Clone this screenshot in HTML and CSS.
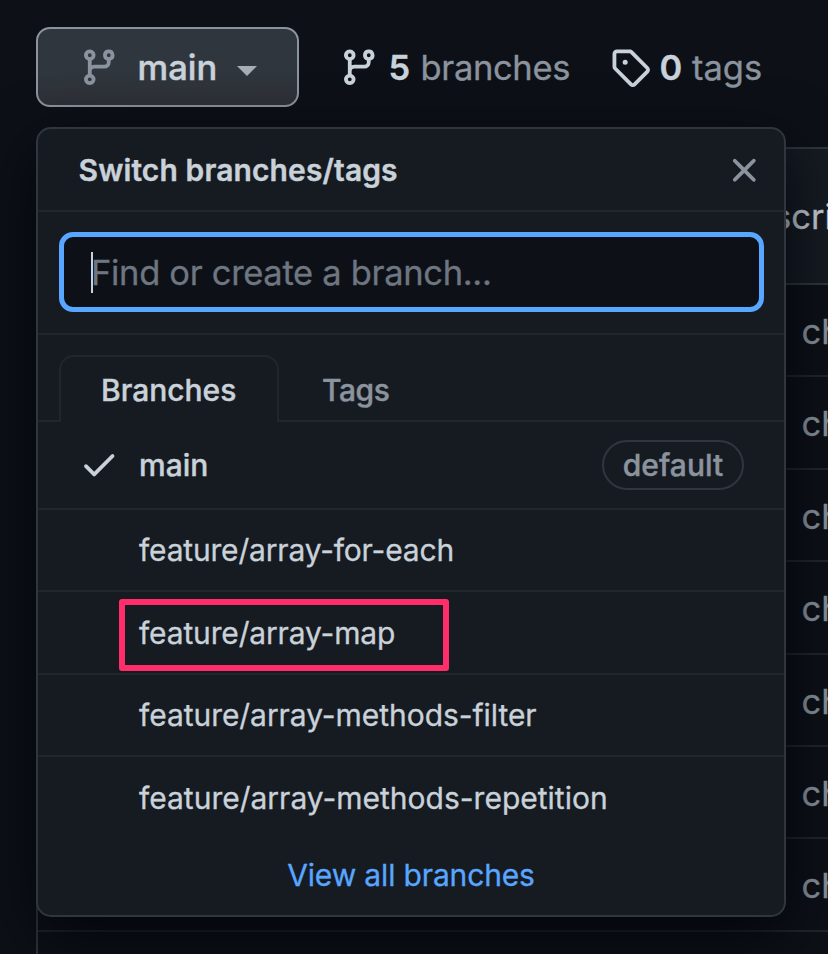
FILE: index.html
```html
<!DOCTYPE html>
<html lang="en">
<head>
<meta charset="utf-8">
<title>Branches</title>
<link rel="stylesheet" href="styles.css">
</head>
<body>
<svg class="defs" aria-hidden="true">
  <symbol id="branch" viewBox="0 0 16 16"><path fill-rule="evenodd" d="M11.75 2.5a.75.75 0 100 1.5.75.75 0 000-1.5zm-2.25.75a2.25 2.25 0 113 2.122V6A2.5 2.5 0 0110 8.5H6a1 1 0 00-1 1v1.128a2.251 2.251 0 11-1.5 0V5.372a2.25 2.25 0 111.5 0v1.836A2.492 2.492 0 016 7h4a1 1 0 001-1v-.628A2.25 2.25 0 019.5 3.25zM4.25 12a.75.75 0 100 1.5.75.75 0 000-1.5zM3.5 3.25a.75.75 0 111.5 0 .75.75 0 01-1.5 0z"/></symbol>
</svg>
<div class="page">
  <header class="toolbar">
    <button class="branch-button">
      <svg class="icon"><use href="#branch"/></svg>
      <span class="branch-name">main</span>
      <span class="caret"></span>
    </button>
    <a class="stat stat-branches">
      <svg class="icon"><use href="#branch"/></svg>
      <strong>5</strong><span class="label-branches">branches</span>
    </a>
    <a class="stat stat-tags">
      <svg class="icon" viewBox="0 0 16 16"><path fill-rule="evenodd" d="M2.5 7.775V2.75a.25.25 0 01.25-.25h5.025a.25.25 0 01.177.073l6.25 6.25a.25.25 0 010 .354l-5.025 5.025a.25.25 0 01-.354 0l-6.25-6.25a.25.25 0 01-.073-.177zm-1.5 0V2.75C1 1.784 1.784 1 2.75 1h5.025c.464 0 .91.184 1.238.513l6.25 6.25a1.75 1.75 0 010 2.474l-5.026 5.026a1.75 1.75 0 01-2.474 0l-6.25-6.25A1.75 1.75 0 011 7.775zM6 5a1 1 0 100 2 1 1 0 000-2z"/></svg>
      <strong>0</strong><span class="label-tags">tags</span>
    </a>
  </header>

  <main class="files">
    <div class="files-head">scri</div>
    <div class="file">ch</div>
    <div class="file">ch</div>
    <div class="file">ch</div>
    <div class="file">ch</div>
    <div class="file">ch</div>
    <div class="file">ch</div>
    <div class="file">ch</div>
    <div class="file"></div>
  </main>

  <section class="menu">
    <div class="menu-head">
      <span class="menu-title">Switch branches/tags</span>
      <svg class="icon close" viewBox="0 0 16 16"><path d="M3.72 3.72a.75.75 0 011.06 0L8 6.94l3.22-3.22a.75.75 0 111.06 1.06L9.06 8l3.22 3.22a.75.75 0 11-1.06 1.06L8 9.06l-3.22 3.22a.75.75 0 01-1.06-1.06L6.94 8 3.72 4.78a.75.75 0 010-1.06z"/></svg>
    </div>
    <div class="search">
      <div class="field"><span class="cursor"></span><span class="placeholder">Find or create a branch...</span></div>
    </div>
    <nav class="tabs">
      <span class="tab active">Branches</span>
      <span class="tab inactive">Tags</span>
    </nav>
    <div class="item current">
      <svg class="icon check" viewBox="0 0 16 16"><path d="M13.78 4.22a.75.75 0 010 1.06l-7.25 7.25a.75.75 0 01-1.06 0L2.22 9.28a.75.75 0 011.06-1.06L6 10.94l6.72-6.72a.75.75 0 011.06 0z"/></svg>
      <span class="item-main">main</span>
      <span class="badge">default</span>
    </div>
    <div class="item"><span class="n1">feature/array-for-each</span></div>
    <div class="item marked"><span class="n2">feature/array-map</span></div>
    <div class="item"><span class="n3">feature/array-methods-filter</span></div>
    <div class="item last"><span class="n4">feature/array-methods-repetition</span></div>
    <a class="view-all">View all branches</a>
  </section>
</div>
</body>
</html>
```

FILE: styles.css
```css
*, *::after { box-sizing: border-box; }
body {
  margin: 0;
  background: #0d1117;
  color: #c9d1d9;
  font-family: Inter, "Liberation Sans", sans-serif;
  -webkit-text-stroke: 0.3px;
}
.defs { display: none; }
.page {
  position: relative;
  width: 828px;
  height: 954px;
  overflow: hidden;
}
.icon {
  width: 40.5px;
  height: 40.5px;
  fill: currentColor;
  flex: none;
}
.toolbar {
  display: flex;
  align-items: center;
  height: 147px;
  padding: 27px 0 40px 36px;
  font-size: 34.5px;
  white-space: nowrap;
}
.branch-button {
  display: flex;
  align-items: center;
  width: 263px;
  height: 80px;
  padding: 0 0 0 40.5px;
  border: 2px solid #8b949e;
  border-radius: 14px;
  background: linear-gradient(#30363d 60%, #2e3037);
  color: #8b949e;
  font: inherit;
}
.branch-name {
  width: 99px;
  margin-left: 18.5px;
  color: #c9d1d9;
  font-weight: 500;
  text-align: left;
  -webkit-text-stroke: 0.5px;
}
.caret {
  margin-top: 7px;
  border: 10px solid transparent;
  border-top-color: #a6adb5;
  border-bottom: 0;
}
.stat { display: flex; align-items: center; }
.stat strong { font-weight: 600; }
.stat span { color: #8b949e; }
.stat-branches { margin-left: 40px; width: 270.5px; }
.stat-branches strong, .stat-tags strong { width: 32px; margin-left: 9px; }
.stat-tags strong { width: 32.5px; margin-left: 9.5px; }
.label-branches { letter-spacing: -0.35px; }
.files {
  height: 820px;
  margin-left: 36px;
  border: 2px solid #30363d;
  border-right: 0;
  border-radius: 14px 0 0 0;
  font-size: 34.5px;
  color: #8b949e;
}
.files-head {
  height: 136px;
  padding-left: 735px;
  border-bottom: 2px solid #30363d;
  border-radius: 12px 0 0 0;
  background: #161b22;
  color: #c9d1d9;
  line-height: 136px;
}
.file {
  height: 92.4px;
  padding-left: 763.5px;
  border-bottom: 2px solid #21262d;
  line-height: 93.5px;
}
.menu {
  position: absolute;
  top: 127px;
  left: 36px;
  width: 750px;
  height: 790px;
  border: 2px solid #30363d;
  border-radius: 15px;
  background: #161b22;
  box-shadow: 0 20px 62px rgba(1, 4, 9, 0.85);
  font-size: 30px;
  white-space: nowrap;
}
.menu-head {
  display: flex;
  align-items: center;
  justify-content: space-between;
  height: 83px;
  padding: 0 20px 0 40.5px;
  border-bottom: 2px solid #21262d;
}
.menu-title { font-weight: 600; letter-spacing: 0.12px; -webkit-text-stroke: 0.4px; }
.close { color: #8b949e; margin-top: 1px; }
.search {
  height: 123px;
  padding: 20px 20px 0 21px;
  border-bottom: 2px solid #21262d;
}
.field {
  display: flex;
  align-items: center;
  height: 80px;
  padding-left: 27px;
  border: 5px solid #58a6ff;
  border-radius: 14px;
  background: #0d1117;
  color: #6e7681;
  font-size: 34.5px;
}
.placeholder { letter-spacing: -0.32px; }
.cursor { width: 2px; height: 41px; background: #c9d1d9; margin-right: -2px; }
.tabs {
  display: flex;
  height: 87px;
  padding: 20px 0 0 21px;
  box-shadow: inset 0 -2px #21262d;
  font-weight: 500;
  line-height: 66px;
  -webkit-text-stroke: 0.4px;
}
.tab.active {
  width: 220px;
  padding-left: 40px;
  border: 2px solid #21262d;
  border-bottom: 0;
  border-radius: 15px 15px 0 0;
  background: #161b22;
}
.tab.inactive { margin-left: 43px; padding-top: 2px; color: #8b949e; letter-spacing: -0.4px; }
.item {
  display: flex;
  align-items: center;
  height: 82.4px;
  padding-left: 101px;
  border-bottom: 2px solid #21262d;
}
.item.current {
  height: 88px;
  padding-left: 40.5px;
  font-weight: 500;
  -webkit-text-stroke: 0.4px;
}
.check { margin-top: -1px; }
.item-main { margin-left: 20px; flex: 1; }
.n1 { letter-spacing: -0.18px; }
.n2 { letter-spacing: -0.15px; }
.n3 { letter-spacing: -0.05px; }
.n4 { letter-spacing: 0; }
.badge {
  width: 142px;
  height: 50px;
  margin-right: 40px;
  border: 2px solid #30363d;
  border-radius: 25px;
  color: #8b949e;
  line-height: 46px;
  text-align: center;
}
.item.last { border-bottom-color: transparent; padding-top: 2px; }
.marked { position: relative; }
.marked::after {
  content: "";
  position: absolute;
  top: 7px;
  left: 81px;
  width: 330px;
  height: 72px;
  border: 6px solid #ff2d6a;
  border-radius: 3px;
}
.view-all {
  display: block;
  color: #58a6ff;
  letter-spacing: -0.15px;
  line-height: 70px;
  text-align: center;
}
```
